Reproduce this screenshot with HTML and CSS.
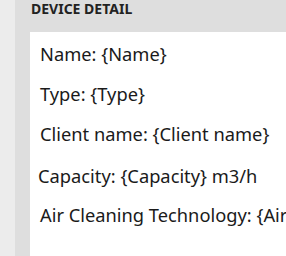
FILE: index.html
```html
<!DOCTYPE html>
<html lang="en">

<head>
    <meta charset="UTF-8">
    <title>Device Detail</title>
    <link rel="stylesheet" href="styles.css">
</head>

<body>
    <div class="page">
        <div class="sidebar"></div>
        <div class="panel">
            <h2 class="panel-title">DEVICE DETAIL</h2>
            <div class="card">
                <p class="field">Name: {Name}</p>
                <p class="field">Type: {Type}</p>
                <p class="field">Client name: {Client name}</p>
                <p class="field field-shift">Capacity: {Capacity} m3/h</p>
                <p class="field">Air Cleaning Technology: {Air Cleaning Technology}</p>
            </div>
        </div>
    </div>
</body>

</html>
```

FILE: styles.css
```css
body {
    margin: 0;
    font-family: "Noto Sans", "Open Sans", sans-serif;
    color: #1a1a1a;
    overflow: hidden;
}

.page {
    display: flex;
    height: 256px;
}

.sidebar {
    width: 15px;
    background-color: #ececec;
}

.panel {
    flex: 1;
    display: flex;
    flex-direction: column;
    background-color: #dedede;
    padding-left: 15px;
    min-width: 0;
}

.panel-title {
    margin: 0;
    height: 32px;
    padding-left: 1px;
    box-sizing: border-box;
    font-size: 14px;
    font-weight: bold;
    line-height: 17px;
    color: #222;
}

.card {
    flex: 1;
    background-color: #fff;
    padding: 10px 0 0 10px;
    white-space: nowrap;
    overflow: hidden;
}

.field {
    margin: 0;
    height: 40px;
    font-size: 18.3px;
    line-height: 24px;
}

.field-shift {
    margin: 2px 0 0 -2px;
    height: 39px;
}
```
